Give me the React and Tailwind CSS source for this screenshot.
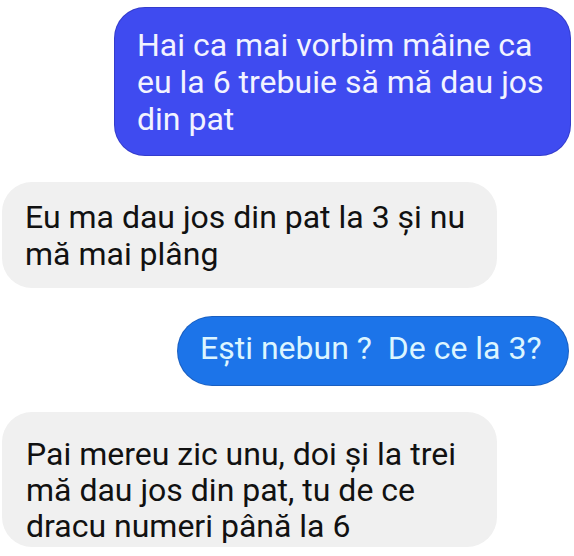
const font = { fontFamily: "Roboto, 'Noto Sans', sans-serif" };

const Bubble = ({ lines, className }) => (
  <div className={`text-[32px] ${className}`}>
    {lines.map((l, i) => (
      <div key={i} className="whitespace-pre">{l}</div>
    ))}
  </div>
);

export default function App() {
  return (
    <div className="w-[574px] h-[556px] bg-white overflow-hidden flex flex-col pt-[8px]" style={font}>
      <div className="flex justify-end pr-[4px]">
        <Bubble
          className="w-[455px] rounded-[30px] bg-[#3f4bf0] text-[#f2f3ff] pl-[22px] pt-[19px] pb-[17px] leading-[37px] shadow-[0_0_0_1px_#343ccc]"
          lines={["Hai ca mai vorbim mâine ca", "eu la 6 trebuie să mă dau jos", "din pat"]}
        />
      </div>
      <div className="flex justify-start pl-[2px] mt-[27px]">
        <Bubble
          className="w-[495px] rounded-[30px] bg-[#f0f0f0] text-[#111111] pl-[23px] pt-[17px] pb-[15px] leading-[37px]"
          lines={["Eu ma dau jos din pat la 3 și nu", "mă mai plâng"]}
        />
      </div>
      <div className="flex justify-end pr-[6px] mt-[29px]">
        <Bubble
          className="w-[390px] h-[68px] rounded-full bg-[#1c74e9] text-[#dcf5ff] pl-[22px] pt-[13px] leading-[37px] shadow-[0_0_0_1px_#1a5fc0]"
          lines={["Ești nebun ?  De ce la 3?"]}
        />
      </div>
      <div className="flex justify-start pl-[2px] mt-[27px]">
        <Bubble
          className="w-[495px] rounded-[30px] bg-[#f0f0f0] text-[#111111] pl-[24px] pt-[24px] pb-[3px] leading-[36px]"
          lines={["Pai mereu zic unu, doi și la trei", "mă dau jos din pat, tu de ce", "dracu numeri până la 6"]}
        />
      </div>
    </div>
  );
}
